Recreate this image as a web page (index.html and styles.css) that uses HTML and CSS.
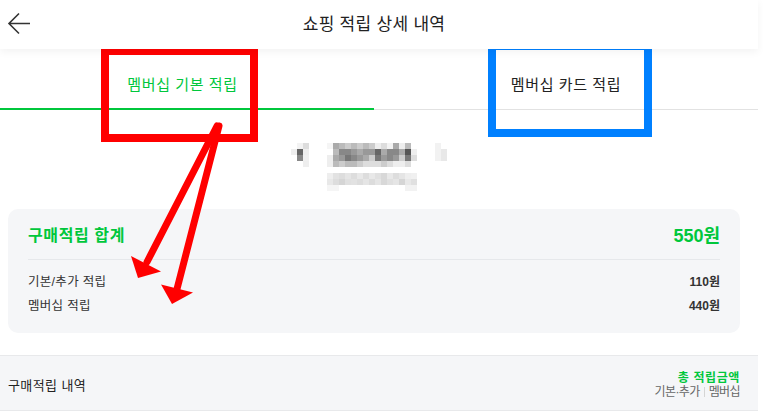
FILE: index.html
```html
<!DOCTYPE html>
<html lang="ko">
<head>
<meta charset="utf-8">
<title>쇼핑 적립 상세 내역</title>
<link rel="stylesheet" href="styles.css">
</head>
<body>
<div class="page">
  <header class="topbar">
    <button class="back" aria-label="뒤로">
      <svg width="24" height="24" viewBox="0 0 24 24"><path d="M23 11.5H2M12 1.5L2 11.5L12 21.5" fill="none" stroke="#333" stroke-width="1.6"/></svg>
    </button>
    <h1 class="title">쇼핑 적립 상세 내역</h1>
  </header>

  <nav class="tabs">
    <div class="tab active">멤버십 기본 적립</div>
    <div class="tab">멤버십 카드 적립</div>
  </nav>

  <div class="profile">
    <svg class="blur" width="200" height="70" viewBox="0 0 200 70">
      <g shape-rendering="crispEdges">
        <rect x="19" y="13" width="6" height="6" fill="#f3f3f3"/><rect x="25" y="13" width="6" height="6" fill="#dddddd"/>
        <rect x="13" y="19" width="6" height="6" fill="#eeeeee"/><rect x="19" y="19" width="6" height="6" fill="#666666"/><rect x="25" y="19" width="6" height="6" fill="#eeeeee"/>
        <rect x="19" y="25" width="6" height="6" fill="#888888"/><rect x="25" y="25" width="6" height="6" fill="#f0f0f0"/>
        <rect x="25" y="31" width="6" height="6" fill="#eeeeee"/>

        <rect x="49" y="13" width="6" height="6" fill="#f5f5f5"/><rect x="55" y="13" width="6" height="6" fill="#aaaaaa"/><rect x="61" y="13" width="6" height="6" fill="#bbbbbb"/><rect x="67" y="13" width="6" height="6" fill="#cccccc"/><rect x="73" y="13" width="6" height="6" fill="#bbbbbb"/><rect x="79" y="13" width="6" height="6" fill="#cccccc"/><rect x="85" y="13" width="6" height="6" fill="#bbbbbb"/><rect x="91" y="13" width="6" height="6" fill="#cccccc"/><rect x="97" y="13" width="6" height="6" fill="#eeeeee"/><rect x="103" y="13" width="6" height="6" fill="#dddddd"/><rect x="109" y="13" width="6" height="6" fill="#f3f3f3"/><rect x="115" y="13" width="6" height="6" fill="#aaaaaa"/><rect x="121" y="13" width="6" height="6" fill="#eeeeee"/><rect x="127" y="13" width="6" height="6" fill="#bbbbbb"/>

        <rect x="55" y="19" width="6" height="6" fill="#bbbbbb"/><rect x="61" y="19" width="6" height="6" fill="#888888"/><rect x="67" y="19" width="6" height="6" fill="#888888"/><rect x="73" y="19" width="6" height="6" fill="#999999"/><rect x="79" y="19" width="6" height="6" fill="#aaaaaa"/><rect x="85" y="19" width="6" height="6" fill="#999999"/><rect x="91" y="19" width="6" height="6" fill="#999999"/><rect x="97" y="19" width="6" height="6" fill="#666666"/><rect x="103" y="19" width="6" height="6" fill="#aaaaaa"/><rect x="109" y="19" width="6" height="6" fill="#888888"/><rect x="115" y="19" width="6" height="6" fill="#888888"/><rect x="121" y="19" width="6" height="6" fill="#aaaaaa"/><rect x="127" y="19" width="6" height="6" fill="#555555"/><rect x="133" y="19" width="6" height="6" fill="#eeeeee"/>

        <rect x="49" y="25" width="6" height="6" fill="#eeeeee"/><rect x="55" y="25" width="6" height="6" fill="#aaaaaa"/><rect x="61" y="25" width="6" height="6" fill="#999999"/><rect x="67" y="25" width="6" height="6" fill="#777777"/><rect x="73" y="25" width="6" height="6" fill="#888888"/><rect x="79" y="25" width="6" height="6" fill="#999999"/><rect x="85" y="25" width="6" height="6" fill="#aaaaaa"/><rect x="91" y="25" width="6" height="6" fill="#cccccc"/><rect x="97" y="25" width="6" height="6" fill="#777777"/><rect x="103" y="25" width="6" height="6" fill="#999999"/><rect x="109" y="25" width="6" height="6" fill="#888888"/><rect x="115" y="25" width="6" height="6" fill="#999999"/><rect x="121" y="25" width="6" height="6" fill="#cccccc"/><rect x="127" y="25" width="6" height="6" fill="#777777"/><rect x="133" y="25" width="6" height="6" fill="#dddddd"/>

        <rect x="49" y="31" width="6" height="6" fill="#eeeeee"/><rect x="55" y="31" width="6" height="6" fill="#bbbbbb"/><rect x="61" y="31" width="6" height="6" fill="#cccccc"/><rect x="67" y="31" width="6" height="6" fill="#bbbbbb"/><rect x="73" y="31" width="6" height="6" fill="#bbbbbb"/><rect x="79" y="31" width="6" height="6" fill="#cccccc"/><rect x="85" y="31" width="6" height="6" fill="#dddddd"/><rect x="91" y="31" width="6" height="6" fill="#dddddd"/><rect x="97" y="31" width="6" height="6" fill="#dddddd"/><rect x="103" y="31" width="6" height="6" fill="#cccccc"/><rect x="109" y="31" width="6" height="6" fill="#dddddd"/><rect x="115" y="31" width="6" height="6" fill="#eeeeee"/><rect x="121" y="31" width="6" height="6" fill="#eeeeee"/><rect x="127" y="31" width="6" height="6" fill="#dddddd"/>

        <rect x="157" y="13" width="6" height="18" fill="#f2f2f2"/><rect x="163" y="19" width="6" height="12" fill="#e8e8e8"/>

        <rect x="49" y="43" width="6" height="6" fill="#eeeeee"/><rect x="55" y="43" width="6" height="6" fill="#e2e2e2"/><rect x="61" y="43" width="6" height="6" fill="#dddddd"/><rect x="67" y="43" width="6" height="6" fill="#e5e5e5"/><rect x="73" y="43" width="6" height="6" fill="#dddddd"/><rect x="79" y="43" width="6" height="6" fill="#e8e8e8"/><rect x="85" y="43" width="6" height="6" fill="#dddddd"/><rect x="91" y="43" width="6" height="6" fill="#e8e8e8"/><rect x="97" y="43" width="6" height="6" fill="#e0e0e0"/><rect x="103" y="43" width="6" height="6" fill="#d8d8d8"/><rect x="109" y="43" width="6" height="6" fill="#e8e8e8"/><rect x="115" y="43" width="6" height="6" fill="#dddddd"/><rect x="121" y="43" width="6" height="6" fill="#e5e5e5"/><rect x="127" y="43" width="6" height="6" fill="#eeeeee"/><rect x="133" y="43" width="6" height="6" fill="#f0f0f0"/>
        <rect x="49" y="49" width="6" height="6" fill="#e8e8e8"/><rect x="55" y="49" width="6" height="6" fill="#dddddd"/><rect x="61" y="49" width="6" height="6" fill="#d5d5d5"/><rect x="67" y="49" width="6" height="6" fill="#e0e0e0"/><rect x="73" y="49" width="6" height="6" fill="#e2e2e2"/><rect x="79" y="49" width="6" height="6" fill="#dddddd"/><rect x="85" y="49" width="6" height="6" fill="#e5e5e5"/><rect x="91" y="49" width="6" height="6" fill="#dcdcdc"/><rect x="97" y="49" width="6" height="6" fill="#e5e5e5"/><rect x="103" y="49" width="6" height="6" fill="#d8d8d8"/><rect x="109" y="49" width="6" height="6" fill="#e0e0e0"/><rect x="115" y="49" width="6" height="6" fill="#e5e5e5"/><rect x="121" y="49" width="6" height="6" fill="#d5d5d5"/><rect x="127" y="49" width="6" height="6" fill="#e8e8e8"/><rect x="133" y="49" width="6" height="6" fill="#e0e0e0"/>
        <rect x="49" y="55" width="12" height="6" fill="#f5f5f5"/><rect x="127" y="55" width="12" height="6" fill="#f2f2f2"/>
      </g>
    </svg>
  </div>

  <section class="summary">
    <div class="summary-head">
      <span class="summary-title">구매적립 합계</span>
      <span class="summary-total">550원</span>
    </div>
    <div class="summary-rows">
      <div class="row"><span class="row-label">기본/추가 적립</span><span class="row-value">110원</span></div>
      <div class="row"><span class="row-label">멤버십 적립</span><span class="row-value">440원</span></div>
    </div>
  </section>

  <section class="history">
    <span class="history-title">구매적립 내역</span>
    <div class="history-legend">
      <span class="legend-main">총 적립금액</span>
      <span class="legend-sub">기본·추가<i class="sep"></i>멤버십</span>
    </div>
  </section>

  <svg class="annotations" width="763" height="413" viewBox="0 0 763 413">
    <rect x="105" y="51" width="149" height="87" fill="none" stroke="#ff0000" stroke-width="8"/>
    <rect x="492" y="46" width="156" height="87" fill="none" stroke="#0080ff" stroke-width="8"/>
    <g stroke="#ff0000" stroke-width="7" stroke-linecap="round" fill="none">
      <path d="M217 126 L147 262"/>
      <path d="M219 126 L177 289"/>
    </g>
    <g fill="#ff0000">
      <polygon points="131,256 161,271.5 138,278"/>
      <polygon points="161,284.5 193,292.5 172,304"/>
    </g>
  </svg>
</div>
</body>
</html>
```

FILE: styles.css
```css
* { box-sizing: border-box; }
html, body { margin: 0; padding: 0; background: #fff; }
body {
  font-family: "Liberation Sans", "Noto Sans CJK KR", sans-serif;
  color: #222;
  width: 763px;
  height: 413px;
  overflow: hidden;
}
.page {
  position: relative;
  width: 758px;
}
.topbar {
  position: relative;
  z-index: 1;
  height: 49px;
  display: flex;
  align-items: center;
  justify-content: center;
  background: #fff;
  box-shadow: 0 3px 8px rgba(0, 0, 0, 0.05);
}
.back {
  position: absolute;
  left: 7px;
  top: 12px;
  width: 24px;
  height: 24px;
  padding: 0;
  border: 0;
  background: none;
}
.back svg { display: block; }
.title {
  margin: 0;
  font-size: 17px;
  font-weight: 400;
  line-height: 22px;
  color: #222;
  letter-spacing: 0.3px;
  padding-right: 10px;
}
.tabs {
  display: flex;
  height: 61px;
}
.tab {
  flex: 1 1 0;
  display: flex;
  align-items: center;
  justify-content: center;
  font-size: 15px;
  letter-spacing: 0.6px;
  line-height: 20px;
  color: #222;
  border-bottom: 1px solid #e2e2e2;
  padding-top: 11px;
}
.tab.active {
  flex: 0 0 374px;
  color: #00c73c;
  border-bottom: 2px solid #00c73c;
  padding-top: 12px;
  padding-right: 9px;
}
.profile {
  display: flex;
  justify-content: center;
  padding: 20px 0 9px;
}
.blur { display: block; margin-left: -2px; }
.summary {
  margin: 0 18px 0 8px;
  background: #f5f6f8;
  border-radius: 10px;
  padding: 16px 20px 15px;
}
.summary-head {
  display: flex;
  justify-content: space-between;
  align-items: center;
  height: 22px;
  margin-bottom: 12px;
}
.summary-title {
  font-size: 16px;
  letter-spacing: 0.6px;
  font-weight: 700;
  color: #00c73c;
  line-height: 22px;
}
.summary-total {
  font-size: 18px;
  font-weight: 700;
  color: #00c73c;
  line-height: 22px;
}
.summary-rows {
  border-top: 1px solid #e6e8eb;
  padding-top: 10px;
}
.row {
  display: flex;
  justify-content: space-between;
  align-items: center;
  height: 24px;
}
.row-label { font-size: 12.5px; letter-spacing: 0.3px; color: #333; line-height: 16px; }
.row-value { font-size: 12px; font-weight: 700; color: #333; line-height: 16px; }
.history {
  margin-top: 22px;
  height: 56px;
  background: #f5f6f8;
  border-top: 1px solid #e8e9eb;
  border-bottom: 1px solid #e8e9eb;
  display: flex;
  justify-content: space-between;
  align-items: center;
  padding: 3px 18px 0 8px;
}
.history-title { font-size: 13px; letter-spacing: 0.4px; color: #222; line-height: 18px; padding-top: 3px; }
.history-legend {
  display: flex;
  flex-direction: column;
  align-items: flex-end;
}
.legend-main {
  font-size: 12px;
  letter-spacing: 0.6px;
  font-weight: 700;
  color: #00c73c;
  line-height: 14px;
}
.legend-sub {
  font-size: 12px;
  color: #666;
  line-height: 14px;
  display: flex;
  align-items: center;
  letter-spacing: -0.6px;
}
.sep {
  display: inline-block;
  width: 1px;
  height: 10px;
  background: #d5d5d5;
  margin: 0 4px;
}
.annotations {
  position: absolute;
  left: 0;
  top: 0;
  pointer-events: none;
}
```
